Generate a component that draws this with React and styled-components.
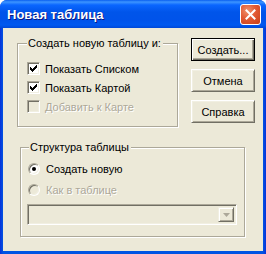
import React from "react";
import styled, { createGlobalStyle } from "styled-components";

const GlobalStyle = createGlobalStyle`
  html, body {
    margin: 0;
    padding: 0;
    background: #ffffff;
  }
  body {
    font-family: "Liberation Sans", Arial, sans-serif;
    font-size: 11px;
  }
`;

const Frame = styled.div`
  width: 266px;
  height: 254px;
  box-sizing: border-box;
  display: flex;
  flex-direction: column;
  background: linear-gradient(90deg, #0831d9 0, #0054e3 3px, #0054e3 263px, #0831d9 266px);
  border-radius: 7px 7px 0 0;
  overflow: hidden;
`;

const TitleBar = styled.div`
  height: 28px;
  flex: none;
  display: flex;
  align-items: center;
  justify-content: space-between;
  padding: 0 5px 0 7px;
  background: linear-gradient(
    180deg,
    #0a5ff0 0,
    #3d95ff 2px,
    #0a66ff 5px,
    #0055ea 12px,
    #0053ea 20px,
    #0059f0 25px,
    #0048d8 28px
  );
`;

const Title = styled.span`
  font-family: "Liberation Sans", Arial, sans-serif;
  font-weight: bold;
  font-size: 13px;
  color: #ffffff;
  text-shadow: 1px 1px 0 #0a1883;
  padding-top: 1px;
`;

const CloseButton = styled.div`
  width: 21px;
  height: 21px;
  box-sizing: border-box;
  border: 1px solid #ffffff;
  border-radius: 3px;
  background: radial-gradient(circle at 35% 30%, #f0926c 0, #e25a34 45%, #c93e16 100%);
  display: flex;
  align-items: center;
  justify-content: center;
`;

const Body = styled.div`
  flex: 1;
  margin: 0 3px 3px;
  background: #ece9d8;
  padding: 10px 0 0 14px;
  color: #000000;
`;

const TopRow = styled.div`
  display: flex;
  align-items: flex-start;
`;

const Group = styled.div`
  position: relative;
  box-sizing: border-box;
  width: ${(p) => p.$w}px;
  height: ${(p) => p.$h}px;
  margin: ${(p) => p.$m};
  padding: ${(p) => p.$pad};
  border: 1px solid #aca899;
  box-shadow: inset 1px 1px 0 #ffffff, 1px 1px 0 #ffffff;
`;

const Legend = styled.span`
  position: absolute;
  top: -7px;
  left: ${(p) => p.$left}px;
  padding: 0 2px 0 1px;
  background: #ece9d8;
  line-height: 13px;
`;

const Row = styled.label`
  display: flex;
  align-items: center;
  height: 13px;
  margin-bottom: ${(p) => p.$gap}px;
  gap: 5px;
  color: ${(p) => (p.$disabled ? "#aca899" : "#000000")};
  text-shadow: ${(p) => (p.$disabled ? "1px 1px 0 #ffffff" : "none")};
`;

const Box = styled.span`
  width: 13px;
  height: 13px;
  box-sizing: border-box;
  flex: none;
  border: 1px solid;
  border-color: #aca899 #ffffff #ffffff #aca899;
  box-shadow: inset 1px 1px 0 #716f64, inset -1px -1px 0 #f1efe2;
  background: ${(p) => (p.$disabled ? "#ece9d8" : "#ffffff")};
  display: flex;
  align-items: center;
  justify-content: center;
`;

const Radio = styled.span`
  width: 12px;
  height: 12px;
  box-sizing: border-box;
  flex: none;
  border-radius: 50%;
  border: 1px solid;
  border-color: #aca899 #ffffff #ffffff #aca899;
  box-shadow: inset 1px 1px 0 #716f64, inset -1px -1px 0 #f1efe2;
  background: ${(p) => (p.$disabled ? "#ece9d8" : "#ffffff")};
  display: flex;
  align-items: center;
  justify-content: center;
  margin-left: 1px;
  margin-right: 1px;

  &::after {
    content: "";
    width: 4px;
    height: 4px;
    border-radius: 50%;
    background: #000000;
    display: ${(p) => (p.$checked ? "block" : "none")};
  }
`;

const ButtonColumn = styled.div`
  display: flex;
  flex-direction: column;
  gap: 8px;
  margin-left: 13px;
`;

const Button = styled.div`
  width: 64px;
  height: 23px;
  box-sizing: border-box;
  display: flex;
  align-items: center;
  justify-content: center;
  border: 1px solid;
  border-color: ${(p) => (p.$default ? "#000000" : "#ffffff #716f64 #716f64 #ffffff")};
  box-shadow: ${(p) =>
    p.$default
      ? "inset 1px 1px 0 #ffffff, inset -1px -1px 0 #716f64, inset -2px -2px 0 #aca899"
      : "inset 1px 1px 0 #f1efe2, inset -1px -1px 0 #aca899"};
  background: #ece9d8;
`;

const Combo = styled.div`
  width: 210px;
  height: 21px;
  box-sizing: border-box;
  margin-top: 8px;
  border: 1px solid;
  border-color: #aca899 #ffffff #ffffff #aca899;
  box-shadow: inset 1px 1px 0 #716f64, inset -1px -1px 0 #f1efe2;
  background: #ece9d8;
  display: flex;
  justify-content: flex-end;
  padding: 2px;
`;

const DropButton = styled.div`
  width: 16px;
  height: 15px;
  box-sizing: border-box;
  border: 1px solid;
  border-color: #f1efe2 #716f64 #716f64 #f1efe2;
  box-shadow: inset 1px 1px 0 #ffffff, inset -1px -1px 0 #aca899;
  background: #ece9d8;
  display: flex;
  align-items: center;
  justify-content: center;
`;

const Check = () => (
  <svg width="7" height="7" viewBox="0 0 7 7">
    <path d="M0 2h1v1h1v1h1v-1h1v-1h1v-1h1v-1h1v3h-1v1h-1v1h-1v1h-1v1h-1v-1h-1v-1h-1z" fill="#000" />
  </svg>
);

const App = () => (
  <>
    <GlobalStyle />
    <Frame>
      <TitleBar>
        <Title>Новая таблица</Title>
        <CloseButton>
          <svg width="11" height="11" viewBox="0 0 11 11">
            <path d="M1.5 1.5l8 8M9.5 1.5l-8 8" stroke="#fff" strokeWidth="2" strokeLinecap="square" />
          </svg>
        </CloseButton>
      </TitleBar>
      <Body>
        <TopRow>
          <Group $w={161} $h={84} $m="5px 0 0 0" $pad="18px 0 0 9px">
            <Legend $left={9}>Создать новую таблицу и:</Legend>
            <Row $gap={6}>
              <Box>
                <Check />
              </Box>
              Показать Списком
            </Row>
            <Row $gap={6}>
              <Box>
                <Check />
              </Box>
              Показать Картой
            </Row>
            <Row $gap={6} $disabled>
              <Box $disabled />
              Добавить к Карте
            </Row>
          </Group>
          <ButtonColumn>
            <Button $default>Создать...</Button>
            <Button>Отмена</Button>
            <Button>Справка</Button>
          </ButtonColumn>
        </TopRow>
        <Group $w={225} $h={90} $m="20px 0 0 3px" $pad="14px 0 0 6px">
          <Legend $left={8}>Структура таблицы</Legend>
          <Row $gap={8}>
            <Radio $checked />
            Создать новую
          </Row>
          <Row $gap={0} $disabled>
            <Radio $disabled />
            Как в таблице
          </Row>
          <Combo>
            <DropButton>
              <svg width="7" height="4" viewBox="0 0 7 4">
                <path d="M0 0h7l-3.5 4z" fill="#aca899" />
              </svg>
            </DropButton>
          </Combo>
        </Group>
      </Body>
    </Frame>
  </>
);

export default App;
